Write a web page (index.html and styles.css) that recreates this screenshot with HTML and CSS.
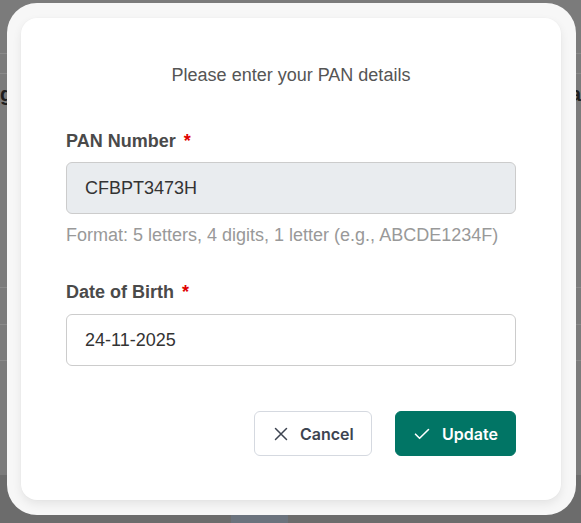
FILE: index.html
```html
<!DOCTYPE html>
<html lang="en">
<head>
<meta charset="utf-8">
<title>PAN details</title>
<link rel="stylesheet" href="styles.css">
</head>
<body>
<div class="backdrop">
  <div class="bg-row r1"></div>
  <div class="bg-row r2"></div>
  <div class="bg-row r3"><span class="peek-l">g</span><span class="peek-r">a</span></div>
  <div class="bg-row r4"></div>
  <div class="bg-row r5"></div>
  <div class="bg-row r6"></div>
  <div class="bg-foot"><div class="bg-chip"></div></div>
</div>

<div class="dialog">
  <div class="card">
    <p class="title">Please enter your PAN details</p>

    <label class="label">PAN Number <span class="req">*</span></label>
    <div class="input readonly">CFBPT3473H</div>
    <p class="help">Format: 5 letters, 4 digits, 1 letter (e.g., ABCDE1234F)</p>

    <label class="label label-dob">Date of Birth <span class="req">*</span></label>
    <div class="input">24-11-2025</div>

    <div class="actions">
      <button class="btn btn-cancel" type="button">
        <svg width="14" height="14" viewBox="0 0 14 14" fill="none" stroke="currentColor" stroke-width="1.5" stroke-linecap="round"><path d="M1.5 1.5L12.5 12.5M12.5 1.5L1.5 12.5"/></svg>
        <span>Cancel</span>
      </button>
      <button class="btn btn-update" type="button">
        <svg width="16" height="12" viewBox="0 0 16 12" fill="none" stroke="currentColor" stroke-width="1.6" stroke-linecap="round" stroke-linejoin="round"><path d="M1.5 6.2L5.6 10.3L14.5 1.5"/></svg>
        <span>Update</span>
      </button>
    </div>
  </div>
</div>
</body>
</html>
```

FILE: styles.css
```css
* { box-sizing: border-box; }
html, body { margin: 0; padding: 0; }
body {
  width: 581px;
  height: 523px;
  overflow: hidden;
  position: relative;
  background: #7b7b7b;
  font-family: "Liberation Sans", Arial, sans-serif;
}

/* dimmed page behind the modal */
.backdrop {
  display: flex;
  flex-direction: column;
  height: 523px;
}
.bg-row { border-bottom: 1px solid #8a8a8a; }
.r1 { height: 54px; }
.r2 { height: 20px; }
.r3 {
  height: 216px;
  display: flex;
  justify-content: space-between;
  align-items: flex-start;
  padding-top: 9px;
  font-size: 20px;
  color: #1e1e1e;
  font-weight: 600;
}
.r4 { height: 37px; }
.r5 { height: 36px; }
.r6 { height: 115px; border-bottom: none; }
.bg-foot {
  flex: 1;
  background: #6c6c6c;
  padding-top: 28px;
  padding-left: 231px;
}
.bg-chip {
  width: 57px;
  height: 20px;
  background: #6b737d;
}

/* modal */
.dialog {
  position: absolute;
  left: 7px;
  top: 3px;
  width: 569px;
  height: 512px;
  background: #f7f7f7;
  border-radius: 30px;
  padding: 15px 15px 15px 14px;
}
.card {
  background: #ffffff;
  border-radius: 16px;
  height: 482px;
  padding: 46px 45px 44px 45px;
  box-shadow: 0 4px 10px rgba(0,0,0,0.08), 0 0 2px rgba(0,0,0,0.03);
  display: flex;
  flex-direction: column;
}
.title {
  margin: 0;
  text-align: center;
  font-size: 18px;
  line-height: 22px;
  color: #555555;
}
.label {
  display: block;
  margin-top: 44px;
  font-size: 18px;
  line-height: 22px;
  font-weight: bold;
  color: #4a4a4a;
}
.label-dob { margin-top: 35px; }
.req { color: #e00000; margin-left: 3px; }
.input {
  margin-top: 10px;
  height: 52px;
  border: 1px solid #cccccc;
  border-radius: 6px;
  padding: 0 18px;
  display: flex;
  align-items: center;
  font-size: 18px;
  color: #333333;
  background: #ffffff;
}
.label-dob + .input { margin-top: 11px; }
.input.readonly { background: #e9ecef; }
.help {
  margin: 10px 0 0;
  font-size: 18px;
  line-height: 22px;
  color: #999999;
}
.actions {
  margin-top: 45px;
  display: flex;
  justify-content: flex-end;
  gap: 23px;
}
.btn {
  height: 45px;
  border-radius: 6px;
  display: flex;
  align-items: center;
  gap: 12px;
  font-family: Inter, "Liberation Sans", sans-serif;
  font-size: 16px;
  font-weight: 600;
  cursor: pointer;
}
.btn-cancel {
  width: 118px;
  padding: 0 0 0 19px;
  background: #ffffff;
  border: 1px solid #d5d9e0;
  color: #3d4451;
}
.btn-update {
  width: 121px;
  padding: 0 0 0 18px;
  background: #017565;
  border: 1px solid #017565;
  color: #ffffff;
}
```
